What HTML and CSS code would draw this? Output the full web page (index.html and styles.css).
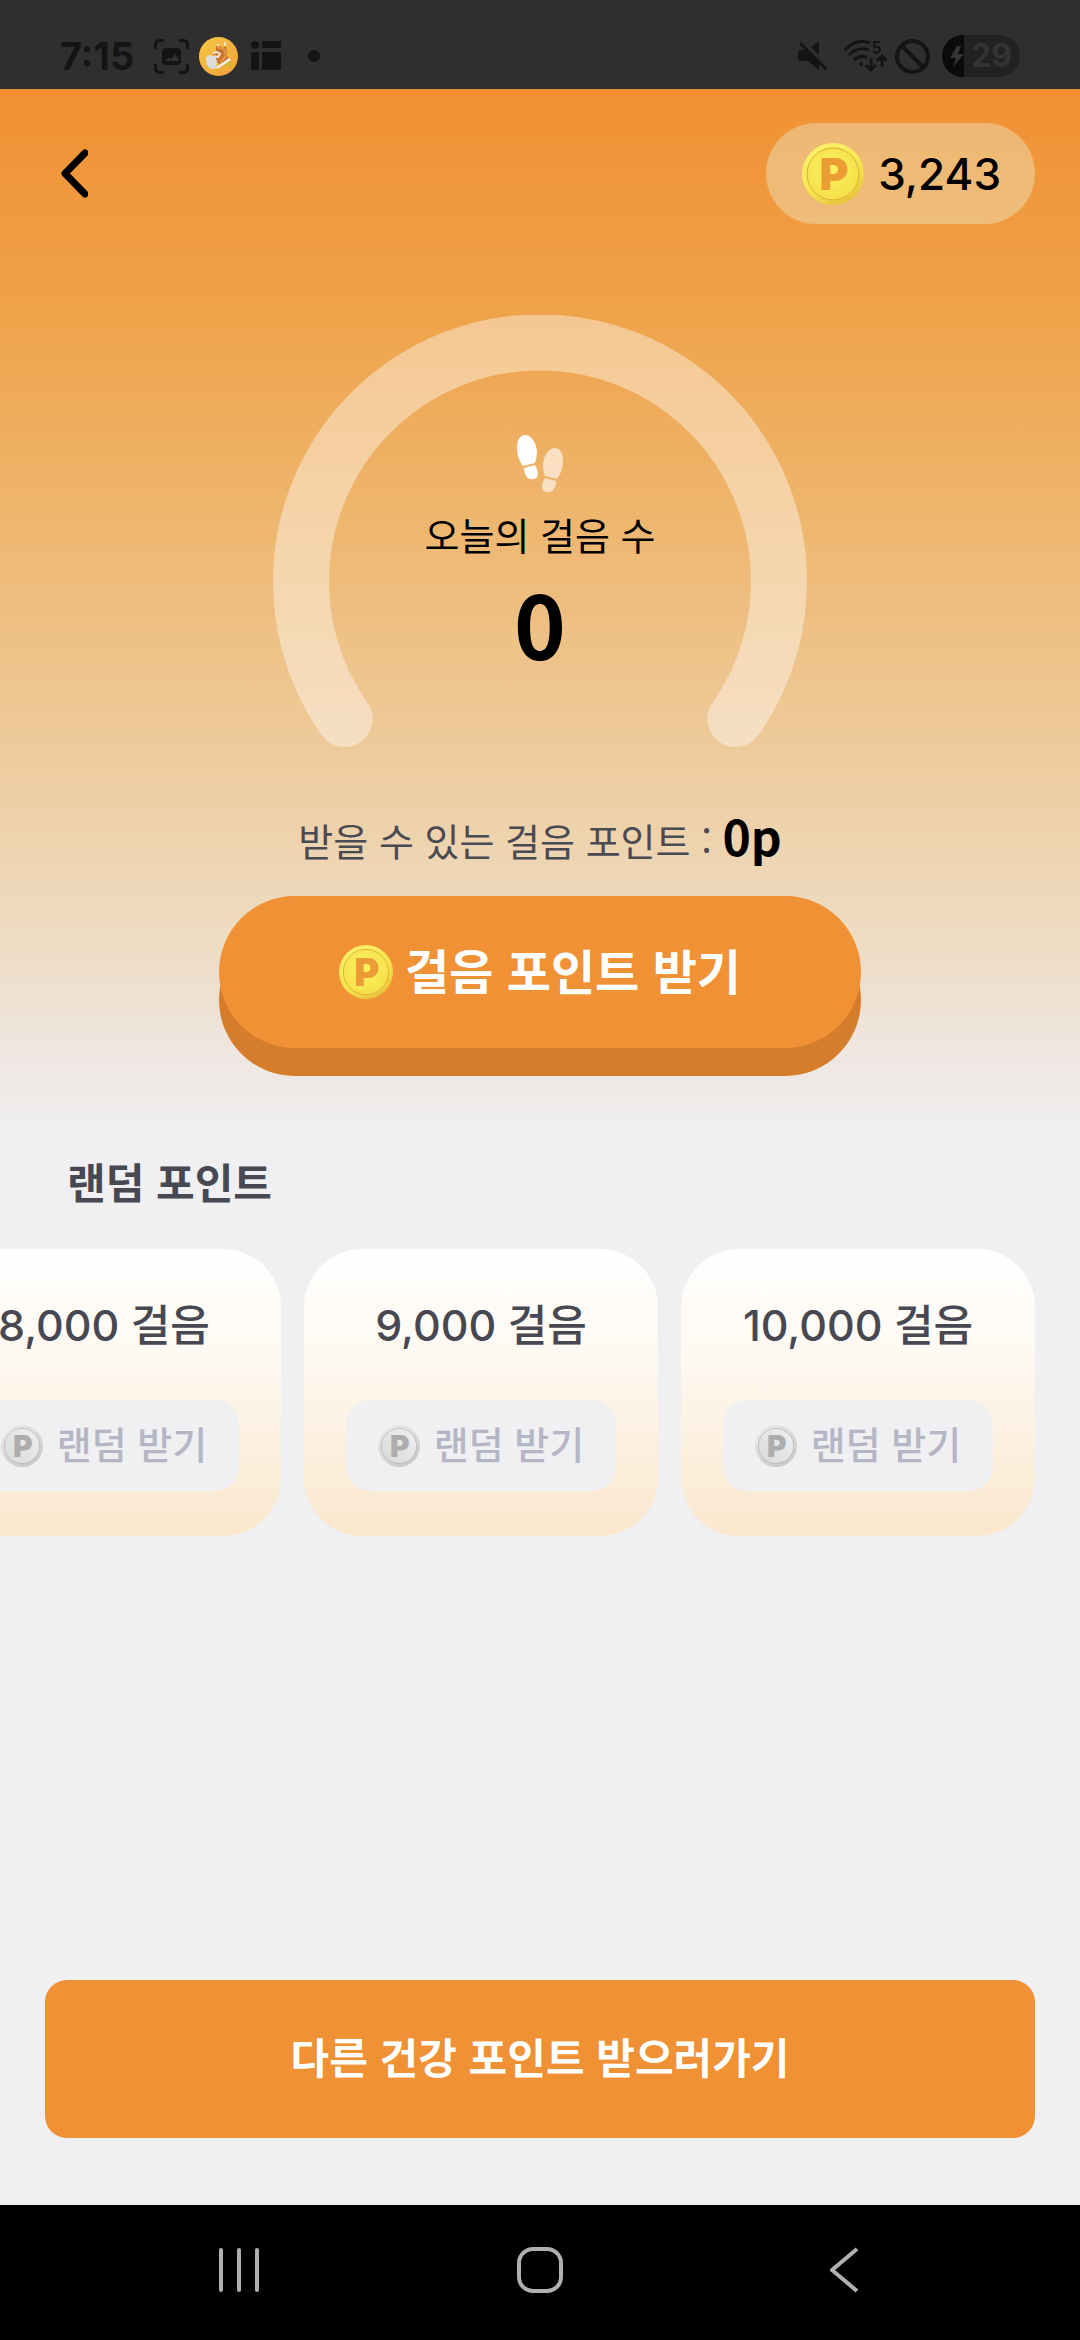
FILE: index.html
```html
<!DOCTYPE html>
<html lang="ko">
<head>
<meta charset="utf-8">
<meta name="viewport" content="width=device-width, initial-scale=1">
<title>걸음 포인트</title>
<link rel="stylesheet" href="styles.css">
</head>
<body>
<svg class="defs" aria-hidden="true">
  <defs>
    <radialGradient id="gold" cx="0.45" cy="0.4" r="0.6">
      <stop offset="0" stop-color="#fdf062"/><stop offset="1" stop-color="#f5e048"/>
    </radialGradient>
    <linearGradient id="goldRim" x1="0.2" y1="0" x2="0.8" y2="1">
      <stop offset="0" stop-color="#fbf06c"/><stop offset="0.55" stop-color="#f7e650"/><stop offset="1" stop-color="#e6bf38"/>
    </linearGradient>
    <linearGradient id="silverRim" x1="0.2" y1="0" x2="0.8" y2="1">
      <stop offset="0" stop-color="#ebebeb"/><stop offset="1" stop-color="#c6c6c6"/>
    </linearGradient>
    <linearGradient id="silver" x1="0" y1="1" x2="1" y2="0">
      <stop offset="0" stop-color="#d9d9d9"/><stop offset="1" stop-color="#f0f0f0"/>
    </linearGradient>
    <linearGradient id="app" x1="0" y1="0" x2="1" y2="1">
      <stop offset="0" stop-color="#f5c845"/><stop offset="1" stop-color="#f0a038"/>
    </linearGradient>
    <symbol id="coin-gold" viewBox="0 0 62 62">
      <circle cx="31" cy="31" r="31" fill="url(#goldRim)"/>
      <circle cx="31" cy="31" r="26" fill="url(#gold)" stroke="#dcae36" stroke-width="1"/>
      <text class="coin-letter" x="32" y="47" fill="#ec9c34">P</text>
    </symbol>
    <symbol id="coin-silver" viewBox="0 0 62 62">
      <circle cx="31" cy="31" r="31" fill="url(#silverRim)"/>
      <circle cx="31" cy="31" r="26" fill="url(#silver)" stroke="#b0b0b0" stroke-width="1"/>
      <text class="coin-letter" x="32" y="47" fill="#adadad">P</text>
    </symbol>
  </defs>
</svg>

<div class="status-bar">
  <div class="status-left">
    <span class="clock">7:15</span>
    <svg class="capture" width="35" height="35" viewBox="0 0 35 35">
      <path d="M1.5 10V6Q1.500 1.500 6 1.500H10M25 1.500H29Q33.500 1.500 33.500 6V10M33.500 25V29Q33.500 33.500 29 33.500H25M10 33.500H6Q1.500 33.500 1.500 29V25" fill="none" stroke="#141414" stroke-width="3"/>
      <rect x="8" y="9" width="19" height="17" rx="4" fill="#141414"/>
      <path d="M11 22L15 18L17 20L21 15L25 21V22Z" fill="#2f2f2f"/>
    </svg>
    <svg class="app-icon" width="39" height="39" viewBox="0 0 39 39">
      <circle cx="19.500" cy="19.500" r="19.500" fill="url(#app)"/>
      <ellipse cx="28" cy="26" rx="5" ry="4" fill="#d9b23a"/>
      <path d="M17 15L17 9L20 9L24 11L27 9L28 18L30 22L22 28L11 21Z" fill="#c8742a"/>
      <path d="M18 10L25 12L27 19L21 26" fill="none" stroke="#e0954a" stroke-width="2"/>
      <path d="M26 5V9M19 7V9" stroke="#f6e3c0" stroke-width="2"/>
      <path d="M30 21L32 23L20 31L14 32L20 28Z" fill="#f3ece4"/>
      <path d="M7 22Q7 18 12 18Q18 19 18 26Q18 31 13 32Q7 31 7 22Z" fill="#dcdcdc"/>
      <path d="M14 16L18 15L21 17L19 20L15 19" fill="none" stroke="#f2e6da" stroke-width="2"/>
    </svg>
    <svg class="tiles" width="30" height="30" viewBox="0 0 30 30" fill="#141414">
      <circle cx="4" cy="4" r="4"/><rect x="11" width="19" height="7"/><rect y="11" width="8" height="18"/><rect x="11" y="11" width="19" height="18"/>
    </svg>
    <svg class="dot" width="12" height="12" viewBox="0 0 12 12"><circle cx="6" cy="6" r="6" fill="#141414"/></svg>
  </div>
  <div class="status-right">
    <svg width="30" height="30" viewBox="0 0 30 30">
      <path d="M0 12Q0 9 4 9H8L21 22V29L10 20H4Q0 20 0 17ZM13 6L21 0V14Z" fill="#141414"/>
      <path d="M2 2L28 28" stroke="#141414" stroke-width="3"/>
    </svg>
    <svg class="wifi" width="43" height="32" viewBox="0 0 43 32" fill="none" stroke="#141414" stroke-width="3">
      <path d="M1 10Q12 -2 26 3M5 15Q14 6 25 10M10 20Q17 14 23 18"/>
      <circle cx="17" cy="24" r="2" fill="#141414" stroke="none"/>
      <path d="M27 18V29M22 25L27 30L32 25M38 27V17M33 21L38 16L43 21"/>
      <path d="M36 2H30V7Q36 6 36 10Q35 14 29 12" stroke-width="2"/>
    </svg>
    <svg width="35" height="35" viewBox="0 0 35 35" fill="none" stroke="#141414" stroke-width="4">
      <circle cx="17.500" cy="17.500" r="15.500"/><path d="M7 7L28 28"/>
    </svg>
    <span class="battery">
      <svg width="22" height="42" viewBox="0 0 22 42"><rect width="22" height="42" fill="#0b0b0b"/><path d="M15 11L8 23H14L11 32L22 19H16L19 11Z" fill="#333"/></svg>
      <span class="battery-level">29</span>
    </span>
  </div>
</div>

<main class="screen">
  <header class="top-bar">
    <button class="back" type="button" aria-label="뒤로">
      <svg width="28" height="50" viewBox="0 0 28 50"><path d="M25 4L5 24.500L25 45" fill="none" stroke="#000" stroke-width="7" stroke-linecap="round" stroke-linejoin="round"/></svg>
    </button>
    <div class="balance">
      <svg class="coin-large" aria-hidden="true"><use href="#coin-gold"/></svg>
      <span>3,243</span>
    </div>
  </header>

  <section class="gauge">
    <svg class="gauge-track" viewBox="0 0 534 432" aria-hidden="true">
      <path d="M71.600 404A239 239 0 1 1 462.400 404" fill="none" stroke="#fff" stroke-opacity="0.4" stroke-width="56" stroke-linecap="round"/>
    </svg>
    <div class="gauge-info">
      <svg class="feet" width="46" height="58" viewBox="0 0 46 58" aria-hidden="true">
        <g fill="#fff">
          <path d="M8 0C14 0 19 7 20 16C20 21 19 25 18 28L6 31C3 27 0 21 0 13C0 5 3 0 8 0Z"/>
          <path d="M7 33L18 30C20 34 21 37 21 39C21 45 12 46 9 41C8 39 7 36 7 33Z"/>
        </g>
        <g fill="#fff" fill-opacity="0.6">
          <path d="M38 13C43 13 46 18 46 26C46 33 43 40 40 44L28 41C27 38 26 34 26 30C26 21 32 13 38 13Z"/>
          <path d="M28 43L39 46C39 50 38 53 37 54C34 59 25 58 25 52C25 49 26 46 28 43Z"/>
        </g>
      </svg>
      <p class="gauge-label">오늘의 걸음 수</p>
      <p class="gauge-value">0</p>
    </div>
  </section>

  <section class="claim">
    <p class="claim-text">받을 수 있는 걸음 포인트 : <strong>0p</strong></p>
    <button class="claim-button" type="button">
      <svg class="coin-medium" aria-hidden="true"><use href="#coin-gold"/></svg>
      <span class="button-label">걸음 포인트 받기</span>
    </button>
  </section>

  <section class="random">
    <h2 class="random-title">랜덤 포인트</h2>
    <ul class="cards">
      <li class="card">
        <p class="card-steps">8,000 걸음</p>
        <button class="card-button" type="button" disabled><svg class="coin-small" aria-hidden="true"><use href="#coin-silver"/></svg><span class="button-label">랜덤 받기</span></button>
      </li>
      <li class="card">
        <p class="card-steps">9,000 걸음</p>
        <button class="card-button" type="button" disabled><svg class="coin-small" aria-hidden="true"><use href="#coin-silver"/></svg><span class="button-label">랜덤 받기</span></button>
      </li>
      <li class="card">
        <p class="card-steps">10,000 걸음</p>
        <button class="card-button" type="button" disabled><svg class="coin-small" aria-hidden="true"><use href="#coin-silver"/></svg><span class="button-label">랜덤 받기</span></button>
      </li>
    </ul>
  </section>

  <div class="bottom-action">
    <button class="more-button" type="button"><span class="button-label">다른 건강 포인트 받으러가기</span></button>
  </div>
</main>

<nav class="system-nav">
  <button type="button" aria-label="최근 앱"><svg width="46" height="46" viewBox="0 0 46 46"><path d="M5 3V43M23 3V43M41 3V43" stroke="#b0b0b0" stroke-width="4" stroke-linecap="round"/></svg></button>
  <button type="button" aria-label="홈"><svg width="46" height="46" viewBox="0 0 46 46"><rect x="2" y="2" width="42" height="42" rx="14" fill="none" stroke="#b0b0b0" stroke-width="4"/></svg></button>
  <button type="button" aria-label="뒤로 가기"><svg width="46" height="46" viewBox="0 0 46 46"><path d="M39 2L14 23L39 44" fill="none" stroke="#b0b0b0" stroke-width="4" stroke-linejoin="round"/></svg></button>
</nav>
</body>
</html>
```

FILE: styles.css
```css
* {
  box-sizing: border-box;
}

body {
  display: flex;
  flex-direction: column;
  min-height: 100vh;
  margin: 0;
  background: #f0eff1;
  color: #000;
  font-family: "Noto Sans CJK KR", sans-serif;
}

p,
h2,
ul {
  margin: 0;
  padding: 0;
}

svg {
  display: block;
  flex: none;
}

button {
  display: flex;
  align-items: center;
  justify-content: center;
  padding: 0;
  border: 0;
  background: none;
  color: inherit;
  font: inherit;
}

.button-label {
  padding-bottom: 6px;
}

.defs {
  position: absolute;
  width: 0;
  height: 0;
}

.coin-letter {
  font: 900 44px Inter, sans-serif;
  text-anchor: middle;
}

.coin-large {
  width: 62px;
  height: 62px;
}

.coin-medium {
  width: 54px;
  height: 54px;
}

.coin-small {
  width: 42px;
  height: 42px;
}

/* Status bar */
.status-bar {
  display: flex;
  justify-content: space-between;
  height: 89px;
  padding: 24px 60px 0;
  background: #2f2f2f;
  color: #141414;
}

.status-left,
.status-right {
  display: flex;
  align-items: center;
  height: 64px;
}

.clock {
  width: 94px;
  font: 700 38px/64px Inter, sans-serif;
}

.app-icon {
  margin-left: 10px;
}

.tiles {
  margin-left: 13px;
}

.dot {
  margin-left: 27px;
}

.wifi {
  margin: 0 8px 0 16px;
}

.battery {
  display: flex;
  align-items: center;
  width: 78px;
  height: 42px;
  margin-left: 12px;
  border-radius: 21px;
  background: #222;
  overflow: hidden;
}

.battery-level {
  padding-left: 7px;
  color: #333;
  font: 700 32px/42px Inter, sans-serif;
}

/* Main screen */
.screen {
  display: flex;
  flex: 1;
  flex-direction: column;
  background: linear-gradient(#f19033 0, #efa34a 226px, #eeb872 450px, #eeca9a 651px, #eedcc3 851px, #efe7e2 971px, #f0eff1 1051px);
}

.top-bar {
  display: flex;
  align-items: center;
  justify-content: space-between;
  padding: 34px 45px 0 60px;
}

.balance {
  display: flex;
  align-items: center;
  gap: 14px;
  height: 101px;
  padding: 0 34px 0 36px;
  border-radius: 51px;
  background: rgba(235, 240, 208, 0.4);
  font: 500 44px/56px Inter, sans-serif;
}

/* Gauge */
.gauge {
  display: grid;
  justify-content: center;
  margin-top: 91px;
}

.gauge-track,
.gauge-info {
  grid-area: 1 / 1;
}

.gauge-track {
  width: 534px;
  height: 432px;
}

.gauge-info {
  display: flex;
  flex-direction: column;
  align-items: center;
  padding-top: 120px;
}

.gauge-label {
  margin-top: 13px;
  font-size: 38px;
  line-height: 56px;
}

.gauge-value {
  font-size: 88px;
  font-weight: 700;
  line-height: 120px;
}

/* Claim */
.claim {
  display: flex;
  flex-direction: column;
  align-items: center;
  margin-top: 64px;
}

.claim-text {
  color: #4a4a52;
  font-size: 38px;
  line-height: 56px;
}

.claim-text strong {
  color: #000;
  font-size: 48px;
  font-weight: 700;
  line-height: 48px;
}

.claim-button {
  gap: 12px;
  width: 642px;
  height: 152px;
  margin: 28px 0 28px;
  border-radius: 76px;
  background: #ef9134;
  box-shadow: 0 28px 0 #d67d2c;
  color: #fff;
  font-size: 48px;
  font-weight: 700;
  line-height: 72px;
}

/* Random points */
.random {
  padding-top: 76px;
}

.random-title {
  padding-left: 67px;
  color: #484852;
  font-size: 42px;
  font-weight: 700;
  line-height: 58px;
}

.cards {
  display: flex;
  justify-content: flex-end;
  gap: 23px;
  margin-top: 39px;
  padding-right: 45px;
  overflow: hidden;
  list-style: none;
}

.card {
  display: flex;
  flex: none;
  flex-direction: column;
  align-items: center;
  width: 354px;
  padding: 44px 0 45px;
  border-radius: 58px;
  background: linear-gradient(#fff, #fef8f0 40%, #fae7cd);
}

.card-steps {
  color: #484852;
  font: 500 43px/64px Inter, "Noto Sans CJK KR", sans-serif;
}

.card-button {
  gap: 14px;
  width: 270px;
  height: 91px;
  margin-top: 43px;
  border-radius: 24px;
  background: #f0eff1;
  color: #b5b6c5;
  font-size: 38px;
  font-weight: 500;
  line-height: 56px;
}

/* Bottom action */
.bottom-action {
  margin-top: auto;
  padding: 0 45px 67px;
}

.more-button {
  width: 100%;
  height: 158px;
  border-radius: 22px;
  background: #ef9134;
  color: #fff;
  font-size: 42px;
  font-weight: 700;
  line-height: 64px;
}

/* System navigation */
.system-nav {
  display: flex;
  align-items: center;
  justify-content: space-around;
  height: 135px;
  padding: 0 88px 6px;
  background: #000;
}
```
